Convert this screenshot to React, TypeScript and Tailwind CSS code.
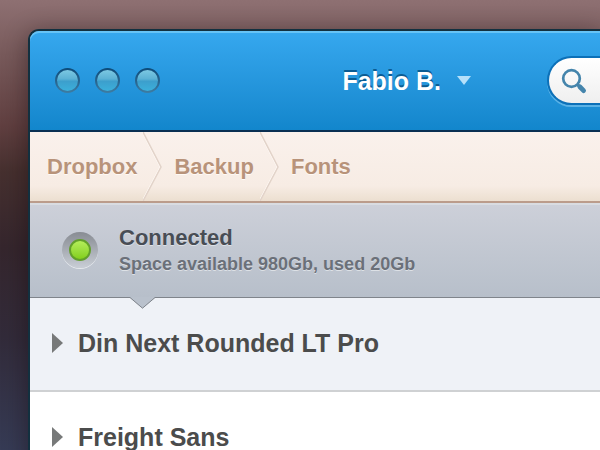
import { Fragment } from "react";

const crumbs = ["Dropbox", "Backup", "Fonts"];
const windowControls = ["Close", "Minimize", "Zoom"];

const fonts = [
  { name: "Din Next Rounded LT Pro", selected: true },
  { name: "Freight Sans", selected: false },
];

function TitleBar() {
  return (
    <header className="flex h-[101px] shrink-0 items-center rounded-tl-[9px] border-b-2 border-[#0a2f52] bg-linear-to-b from-[#36a8ef] to-[#1286cc] pl-[25px] shadow-[inset_0_2px_0_#66c3f6]">
      <div className="flex gap-[15px]">
        {windowControls.map((label) => (
          <button
            key={label}
            aria-label={label}
            className="size-[25px] rounded-full bg-linear-to-b from-[#0b4a78] to-[#3d7da4] p-[2px]"
            type="button"
          >
            <span className="block size-full rounded-full bg-[linear-gradient(#7cc8e2_0%,#5cb2d5_42%,#3c9fcd_54%,#3bb0db_100%)]" />
          </button>
        ))}
      </div>

      <button className="ml-auto flex items-center gap-4 text-[25px] leading-8 font-bold text-white" type="button">
        <span className="[text-shadow:0_-2px_0_#0b5c93]">Fabio B.</span>
        <svg aria-hidden="true" className="h-[9px] w-[14px]" viewBox="0 0 14 9">
          <path d="M0 0h14L7 9z" fill="#b5e0fa" />
        </svg>
      </button>

      <form
        className="ml-[76px] flex h-[49px] w-[53px] shrink-0 items-center overflow-hidden rounded-l-full border-2 border-r-0 border-[#0c70b8] bg-linear-to-b from-white to-[#efefef] pl-3 shadow-[0_2px_0_#5bb2e6]"
        role="search"
      >
        <label className="shrink-0" htmlFor="search" aria-label="Search">
          <svg aria-hidden="true" className="size-[26px]" viewBox="0 0 26 26" fill="none" stroke="#4585ac">
            <circle cx="10.500" cy="10.500" r="8.300" strokeWidth="2.700" />
            <path d="M16.200 16.200l2.400 2.400" strokeWidth="3" />
            <path d="M18.800 18.800l3.800 3.800" strokeWidth="4.800" strokeLinecap="round" />
          </svg>
        </label>
        <input className="min-w-0 flex-1 text-lg outline-none" id="search" type="search" />
      </form>
    </header>
  );
}

function Breadcrumbs() {
  return (
    <nav
      aria-label="Breadcrumb"
      className="flex h-[71px] shrink-0 items-center border-b-2 border-[#bb9c8b] bg-[linear-gradient(#faf1ec_0%,#f7ece4_78%,#ecdfd0_100%)] pl-[17px] text-[22px] leading-7 font-bold text-[#b8937a]"
    >
      {crumbs.map((crumb, index) => (
        <Fragment key={crumb}>
          {index > 0 ? (
            <svg aria-hidden="true" className="mr-3 ml-[6px] h-full w-[19px]" viewBox="0 0 19 69" fill="none">
              <path d="M-1 0L17 35L-1 69" stroke="#fffaf6" strokeWidth="1" />
              <path d="M0 0L18 35L0 69" stroke="#e2d3c9" strokeWidth="1.500" />
            </svg>
          ) : null}
          <a className="[text-shadow:0_1px_0_#fffaf5]" href="#">
            {crumb}
          </a>
        </Fragment>
      ))}
    </nav>
  );
}

function StatusBar() {
  return (
    <section className="relative flex h-[95px] shrink-0 items-center gap-[21px] border-b border-[#7f848b] bg-linear-to-b from-[#cdd0d9] to-[#b7bfca] pl-8 shadow-[inset_0_2px_0_#d9dce1]">
      <span className="flex size-9 items-center justify-center rounded-full bg-linear-to-b from-[#888c93] to-[#c9ced6] shadow-[0_1px_0_#e6e9ed]">
        <span className="size-[22px] rounded-full border-2 border-[#629f2c] bg-linear-to-b from-[#b4ed59] to-[#83cf19]" />
      </span>
      <div className="[text-shadow:0_1px_0_#dde1e6]">
        <h2 className="text-[22px] leading-7 font-bold text-[#484d55]">Connected</h2>
        <p className="text-[18px] leading-6 font-bold text-[#6b7079]">Space available 980Gb, used 20Gb</p>
      </div>
      <svg aria-hidden="true" className="absolute top-full left-[99px] h-3 w-[27px]" viewBox="0 0 27 12">
        <path d="M0 0h27L13.500 11.300z" fill="#b9c1cc" />
        <path d="M0 .5h1L13.500 11.200L26 .5h1" fill="none" stroke="#7f848b" />
      </svg>
    </section>
  );
}

function FontList() {
  return (
    <ul className="flex-1 bg-white">
      {fonts.map((font) => (
        <li key={font.name} className={font.selected ? "border-b-2 border-[#cfd1d3] bg-[#eff2f7]" : "border-b-2 border-[#cfd1d3] bg-white"}>
          <button
            className="flex h-[92px] w-full items-center gap-[15px] pb-[2px] pl-[22px] text-left text-[25px] leading-8 font-bold text-[#4b4c4c]"
            type="button"
          >
            <svg aria-hidden="true" className="h-[20px] w-[11px]" viewBox="0 0 11 20">
              <path d="M0 0L11 10L0 20z" fill="#777979" />
            </svg>
            {font.name}
          </button>
        </li>
      ))}
    </ul>
  );
}

export default function App() {
  return (
    <div className="h-screen overflow-hidden bg-[linear-gradient(#8e7072_0%,#785a5b_12%,#603f40_28%,#46302f_38%,#35262d_55%,#322b3a_75%,#363b55_100%)] pt-[29px] pl-7 font-['Liberation_Sans',Arial,sans-serif]">
      <main className="flex min-h-full flex-col rounded-tl-[11px] border-t-2 border-l-2 border-[#12303f] shadow-[0_4px_24px_rgba(20,8,12,0.45)]">
        <TitleBar />
        <Breadcrumbs />
        <StatusBar />
        <FontList />
      </main>
    </div>
  );
}
